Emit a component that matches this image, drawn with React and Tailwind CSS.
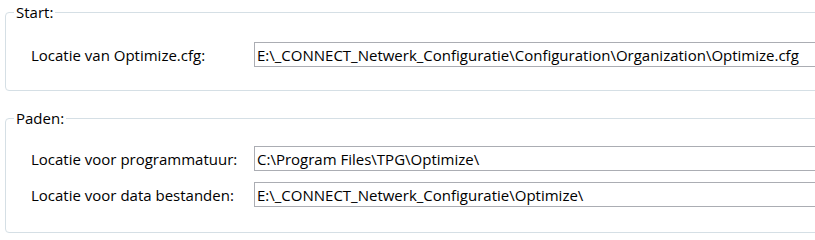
import React from "react";

function Row({ label, value, className = "" }) {
  return (
    <div className={"flex items-center " + className}>
      <div className="w-[223px] shrink-0 text-black">{label}</div>
      <div className="h-[25px] w-[600px] shrink-0 border border-[#abadb3] bg-white pl-[2px] flex items-center text-black whitespace-nowrap overflow-hidden">
        {value}
      </div>
    </div>
  );
}

export default function App() {
  return (
    <div
      className="w-[815px] h-[240px] overflow-hidden bg-white text-[15px] leading-[20px]"
      style={{ fontFamily: '"Open Sans", "Noto Sans", sans-serif' }}
    >
      <fieldset className="ml-[5px] mt-[2px] w-[850px] rounded-[4px] border border-[#d5dfe5] pl-[25px] pt-[20px] pb-[23px]">
        <legend className="ml-[-17px] px-[2px] h-[20px] leading-[20px] text-black">Start:</legend>
        <Row
          label="Locatie van Optimize.cfg:"
          value="E:\_CONNECT_Netwerk_Configuratie\Configuration\Organization\Optimize.cfg"
        />
      </fieldset>
      <fieldset className="ml-[5px] mt-[17px] w-[850px] rounded-[4px] border border-[#d5dfe5] pl-[25px] pt-[18px] pb-[25px]">
        <legend className="ml-[-17px] px-[2px] h-[20px] leading-[20px] text-black">Paden:</legend>
        <Row label="Locatie voor programmatuur:" value="C:\Program Files\TPG\Optimize\" />
        <Row
          className="mt-[11px]"
          label="Locatie voor data bestanden:"
          value="E:\_CONNECT_Netwerk_Configuratie\Optimize\"
        />
      </fieldset>
    </div>
  );
}
